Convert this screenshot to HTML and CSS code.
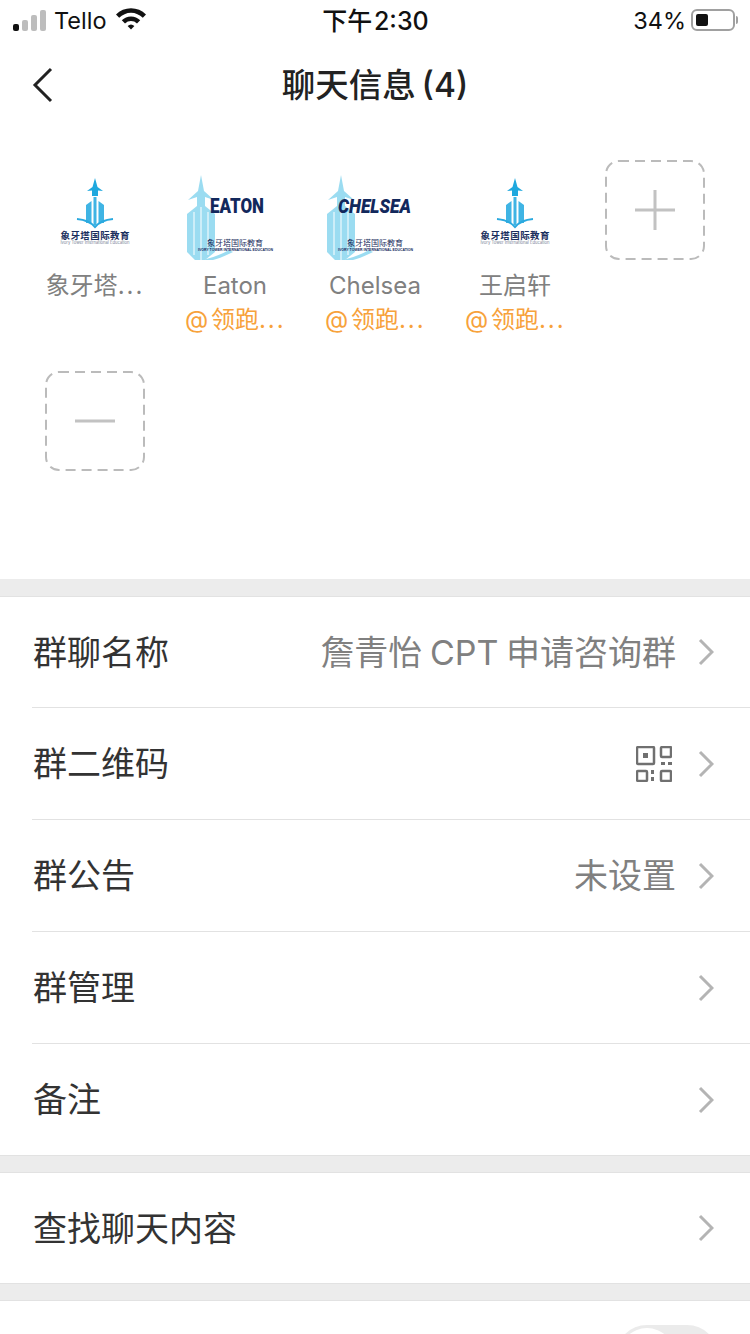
FILE: index.html
```html
<!DOCTYPE html>
<html lang="zh">
  <head>
    <meta charset="UTF-8">
    <title>聊天信息</title>
    <link rel="stylesheet" href="styles.css">
  </head>
  <body>
    <svg class="defs" width="0" height="0">
      <defs>
        <g id="small-logo">
          <path d="M50 18 L52.500 27 L58 31 L53 30.500 V36 H47 V30.500 L42 31 L47.500 27 Z" fill="#1fa8de"/>
          <path d="M41 45 L46.500 41 V63 H41 Z M48.500 37 H51.500 V65 H48.500 Z M53.500 41 L59 45 V63 H53.500 Z" fill="#3fb4e4"/>
          <path d="M32 59 Q44 60 50 67 Q56 60 68 59" fill="none" stroke="#2aa9df" stroke-width="2"/>
          <text class="logo-cn" x="50" y="79" text-anchor="middle" textLength="69">象牙塔国际教育</text>
          <text class="logo-en" x="50" y="84" text-anchor="middle" textLength="69">Ivory Tower International Education</text>
        </g>
        <g id="big-tower" fill="#9bdcf1">
          <path d="M16 15 L19 31 L29 40 L20 37 V46 L30 54 V92 L20 100 H10 L2 92 V54 L12 46 V37 L3 40 L13 31 Z"/>
          <path d="M16 47 V100 M9 52 V95 M23 52 V95" stroke="#fff" stroke-width="1"/>
          <path d="M18 100 Q34 96 44 90 L48 92 Q36 98 28 100 Z"/>
        </g>
      </defs>
    </svg>

    <div class="status-bar">
      <div class="status-left">
        <span class="signal">
          <i class="bar bar-on bar1"></i><i class="bar bar2"></i><i class="bar bar3"></i><i class="bar bar4"></i>
        </span>
        <span>Tello</span>
        <svg class="wifi" width="32" height="24" viewBox="0 0 32 24">
          <path d="M1 8.500 A21 21 0 0 1 31 8.500 L27.800 11.800 A16.500 16.500 0 0 0 4.200 11.800 Z" fill="#111"/>
          <path d="M6.800 14.300 A13 13 0 0 1 25.200 14.300 L22 17.500 A8.500 8.500 0 0 0 10 17.500 Z" fill="#111"/>
          <path d="M12.600 20 A5 5 0 0 1 19.400 20 L16 23.500 Z" fill="#111"/>
        </svg>
      </div>
      <div class="status-time">下午 2:30</div>
      <div class="status-right">
        <span>34%</span>
        <span class="battery"><span class="battery-fill"></span></span>
        <span class="battery-nub"></span>
      </div>
    </div>

    <div class="nav">
      <svg class="back" width="22" height="36" viewBox="0 0 22 36">
        <path d="M19 2 L3 18 L19 34" fill="none" stroke="#222" stroke-width="3"/>
      </svg>
      <div class="nav-title">聊天信息 (4)</div>
    </div>

    <div class="members">
      <div class="member">
        <svg class="avatar" viewBox="0 0 100 100"><use href="#small-logo"/></svg>
        <div class="member-name">象牙塔<span class="dots">...</span></div>
      </div>
      <div class="member">
        <svg class="avatar" viewBox="0 0 100 100">
          <use href="#big-tower"/>
          <text class="logo-big" x="25" y="53" textLength="54" lengthAdjust="spacingAndGlyphs">EATON</text>
          <text class="logo-cn-big" x="22" y="86">象牙塔国际教育</text>
          <text class="logo-en-big" x="13" y="91" textLength="75" lengthAdjust="spacingAndGlyphs">IVORY TOWER INTERNATIONAL EDUCATION</text>
        </svg>
        <div class="member-name">Eaton</div>
        <div class="member-tag">@ 领跑<span class="dots">...</span></div>
      </div>
      <div class="member">
        <svg class="avatar" viewBox="0 0 100 100">
          <use href="#big-tower"/>
          <text class="logo-big logo-italic" x="13" y="53" textLength="73" lengthAdjust="spacingAndGlyphs">CHELSEA</text>
          <text class="logo-cn-big" x="22" y="86">象牙塔国际教育</text>
          <text class="logo-en-big" x="13" y="91" textLength="75" lengthAdjust="spacingAndGlyphs">IVORY TOWER INTERNATIONAL EDUCATION</text>
        </svg>
        <div class="member-name">Chelsea</div>
        <div class="member-tag">@ 领跑<span class="dots">...</span></div>
      </div>
      <div class="member">
        <svg class="avatar" viewBox="0 0 100 100"><use href="#small-logo"/></svg>
        <div class="member-name">王启轩</div>
        <div class="member-tag">@ 领跑<span class="dots">...</span></div>
      </div>
      <div class="member">
        <svg class="avatar" viewBox="0 0 100 100">
          <rect class="dashed" x="1" y="1" width="98" height="98" rx="13"/>
          <path class="sign" d="M30 50 H70 M50 30 V70"/>
        </svg>
      </div>
      <div class="member">
        <svg class="avatar" viewBox="0 0 100 100">
          <rect class="dashed" x="1" y="1" width="98" height="98" rx="13"/>
          <path class="sign" d="M30 50 H70"/>
        </svg>
      </div>
    </div>

    <div class="group group-first">
      <div class="row">
        <div class="row-inner">
          <span class="row-label">群聊名称</span>
          <span class="row-value">詹青怡 CPT 申请咨询群</span>
          <svg class="chevron" width="16" height="28" viewBox="0 0 16 28"><path d="M2 2 L14 14 L2 26"/></svg>
        </div>
      </div>
      <div class="row">
        <div class="row-inner">
          <span class="row-label">群二维码</span>
          <svg class="qr" width="36" height="36" viewBox="0 0 36 36">
            <rect x="1" y="1" width="17" height="17" rx="1"/>
            <rect x="25" y="1" width="10" height="10" rx="1"/>
            <rect x="1" y="25" width="10" height="10" rx="1"/>
            <rect x="25" y="25" width="10" height="10" rx="1"/>
            <path class="qr-dot" d="M7 7 h5 v5 h-5 Z M25 16 h4 v3 h-4 Z M32 16 h4 v3 h-4 Z M15 24 h3 v4 h-3 Z M15 31 h3 v4 h-3 Z"/>
          </svg>
          <svg class="chevron" width="16" height="28" viewBox="0 0 16 28"><path d="M2 2 L14 14 L2 26"/></svg>
        </div>
      </div>
      <div class="row">
        <div class="row-inner">
          <span class="row-label">群公告</span>
          <span class="row-value">未设置</span>
          <svg class="chevron" width="16" height="28" viewBox="0 0 16 28"><path d="M2 2 L14 14 L2 26"/></svg>
        </div>
      </div>
      <div class="row">
        <div class="row-inner">
          <span class="row-label">群管理</span>
          <svg class="chevron" width="16" height="28" viewBox="0 0 16 28"><path d="M2 2 L14 14 L2 26"/></svg>
        </div>
      </div>
      <div class="row">
        <div class="row-inner">
          <span class="row-label">备注</span>
          <svg class="chevron" width="16" height="28" viewBox="0 0 16 28"><path d="M2 2 L14 14 L2 26"/></svg>
        </div>
      </div>
    </div>

    <div class="group">
      <div class="row">
        <div class="row-inner">
          <span class="row-label">查找聊天内容</span>
          <svg class="chevron" width="16" height="28" viewBox="0 0 16 28"><path d="M2 2 L14 14 L2 26"/></svg>
        </div>
      </div>
    </div>

    <div class="group group-last">
      <div class="toggle"><span class="knob"></span></div>
    </div>
  </body>
</html>
```

FILE: styles.css
```css
html {
  height: 1334px;
  overflow: hidden;
}

body {
  margin: 0;
  height: 1334px;
  overflow: hidden;
  background: #ececec;
  font-family: Inter, "Noto Sans CJK SC", sans-serif;
  color: #222;
}

.defs {
  display: block;
  height: 0;
}

/* status bar */
.status-bar {
  height: 40px;
  padding: 0 12px 0 13px;
  background: #fff;
  display: grid;
  grid-template-columns: 1fr auto 1fr;
  align-items: center;
  font-size: 23.500px;
  color: #111;
}

.status-left {
  display: flex;
  align-items: center;
  gap: 8px;
}

.wifi {
  margin-top: -4px;
}

.signal {
  display: flex;
  align-items: flex-end;
  gap: 3px;
  height: 21px;
  width: 33px;
}

.bar {
  display: block;
  width: 6px;
  background: #bdbdbd;
  border-radius: 2px;
}

.bar-on {
  background: #111;
}

.bar1 { height: 7px; }
.bar2 { height: 11px; }
.bar3 { height: 16px; }
.bar4 { height: 21px; }

.status-time {
  margin-bottom: 2px;
  font-size: 25px;
  font-weight: 500;
  word-spacing: -5px;
}

.status-right {
  display: flex;
  align-items: center;
  justify-content: flex-end;
}

.battery {
  box-sizing: border-box;
  width: 44px;
  height: 22px;
  margin-left: 5px;
  padding: 3px;
  border: 2px solid #a0a0a0;
  border-radius: 6px;
  display: flex;
}

.battery-fill {
  width: 12px;
  background: #111;
  border-radius: 2px;
}

.battery-nub {
  width: 2px;
  height: 8px;
  margin-left: 1px;
  background: #a0a0a0;
  border-radius: 0 2px 2px 0;
}

/* nav */
.nav {
  height: 90px;
  background: #fff;
  position: relative;
  display: flex;
  align-items: center;
  justify-content: center;
}

.back {
  position: absolute;
  left: 32px;
  top: 27px;
}

.nav-title {
  font-size: 33.500px;
  font-weight: 500;
  color: #222;
  word-spacing: -3px;
  margin-bottom: 5px;
}

/* members */
.members {
  box-sizing: border-box;
  height: 449px;
  padding: 30px 0 0 45px;
  background: #fff;
  display: grid;
  grid-template-columns: repeat(5, 100px);
  grid-auto-rows: 211px;
  column-gap: 40px;
  align-content: start;
}

.member {
  text-align: center;
}

.avatar {
  display: block;
  width: 100px;
  height: 100px;
}

.member-name {
  margin-top: 9px;
  font-size: 24px;
  line-height: 34px;
  color: #808080;
  white-space: nowrap;
}

.member-tag {
  font-size: 24px;
  line-height: 34px;
  color: #f7a23b;
  white-space: nowrap;
  word-spacing: -4px;
}

.dots {
  letter-spacing: 2px;
}

.dashed {
  fill: none;
  stroke: #bbb;
  stroke-width: 2;
  stroke-dasharray: 10 6;
}

.sign {
  fill: none;
  stroke: #c2c2c2;
  stroke-width: 3;
}

.logo-cn {
  font-size: 9.500px;
  font-weight: 700;
  fill: #1b2f5e;
}

.logo-en {
  font-size: 4.200px;
  fill: #7a8598;
}

.logo-big {
  font-family: Roboto, sans-serif;
  font-size: 20px;
  font-weight: 900;
  fill: #12285c;
}

.logo-italic {
  font-style: italic;
}

.logo-cn-big {
  font-size: 8px;
  fill: #1b2f5e;
}

.logo-en-big {
  font-family: "Liberation Sans", sans-serif;
  font-size: 3.800px;
  font-weight: 700;
  fill: #12285c;
}

/* settings rows */
.group {
  margin-top: 16px;
  background: #fff;
  border-top: 1px solid #e2e2e2;
  border-bottom: 1px solid #e2e2e2;
}

.group-first {
  margin-top: 17px;
}

.group-last {
  height: 60px;
  display: flex;
  justify-content: flex-end;
  padding: 24px 32px 0 0;
}

.row {
  height: 112px;
  padding-left: 32px;
}

.row:first-child {
  height: 111px;
}

.row:last-child {
  height: 111px;
}

.row:only-child {
  height: 110px;
}

.row-inner {
  box-sizing: border-box;
  height: 100%;
  padding-right: 36px;
  display: flex;
  align-items: center;
  border-bottom: 1px solid #e2e2e2;
}

.row:last-child .row-inner {
  border-bottom: 0;
}

.row-label {
  flex: 1;
  margin-left: 1px;
  margin-top: -4px;
  font-size: 34px;
  color: #333;
}

.row-value {
  margin-top: -4px;
  margin-right: 22px;
  font-size: 34px;
  color: #808080;
  word-spacing: -2px;
}

.qr {
  margin-right: 26px;
}

.qr rect {
  fill: none;
  stroke: #707070;
  stroke-width: 2.500;
}

.qr .qr-dot {
  fill: #707070;
}

.chevron {
  flex: none;
}

.chevron path {
  fill: none;
  stroke: #b4b4b4;
  stroke-width: 3;
}

.toggle {
  width: 102px;
  height: 62px;
  background: #ebebeb;
  border-radius: 31px;
  padding: 3px;
  box-sizing: border-box;
}

.knob {
  display: block;
  width: 56px;
  height: 56px;
  background: #fff;
  border-radius: 50%;
}
```
